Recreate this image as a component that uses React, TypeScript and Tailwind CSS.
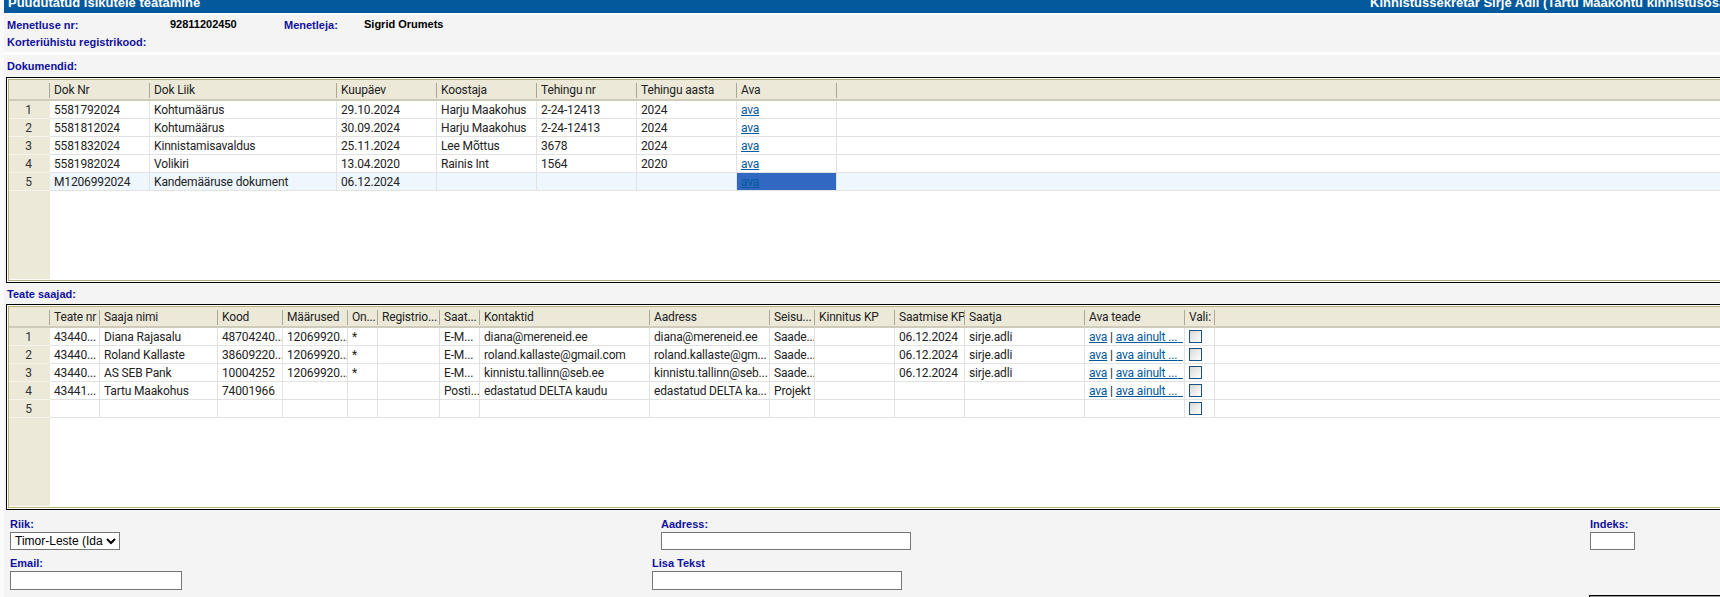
import React from "react";

type Cell = React.ReactNode;

const LINK = "text-[#03599c] underline";

function Grid({ cols, headers, rows, rowClass, cellClass }: {
  cols: string[];
  headers: string[];
  rows: Cell[][];
  rowClass?: (r: number) => string;
  cellClass?: (r: number, c: number) => string;
}) {
  return (
    <div className="h-[206px] w-[1800px] shrink-0 border border-black bg-white ml-[2px]">
      <div className="h-full border border-white">
        <div className="h-full border border-[#b8b078] flex flex-col bg-white pb-[1px]">
          <div className="flex h-[21px] shrink-0 bg-[#ece9d8] pt-[3px] border-b-2 border-[#cfcbba] font-['Roboto'] text-[12px] leading-[15px] tracking-[-0.15px] text-[#222]">
            <div className="w-[41px] h-[15px] shrink-0 border-r border-[#aca899]" />
            {headers.map((h, i) => (
              <div key={i} className={`${cols[i]} h-[15px] shrink-0 border-r border-[#aca899] pl-[4px] overflow-hidden whitespace-nowrap`}>{h}</div>
            ))}
          </div>
          {rows.map((row, r) => (
            <div key={r} className={`flex h-[18px] shrink-0 border-b border-[#e2e2e2] font-['Roboto'] text-[12px] leading-[19px] tracking-[-0.15px] text-[#222] ${rowClass ? rowClass(r) : ""}`}>
              <div className="w-[41px] shrink-0 bg-[#ece9d8] border-b border-[#f6f4ea] -mb-[1px] text-center text-[#333] pr-[2px]">{r + 1}</div>
              {row.map((c, i) => (
                <div key={i} className={`${cols[i]} shrink-0 border-r border-[#e2e2e2] pl-[4px] overflow-hidden whitespace-nowrap ${cellClass ? cellClass(r, i) : ""}`}>{c}</div>
              ))}
            </div>
          ))}
          <div className="flex-1 flex min-h-0">
            <div className="w-[41px] bg-[#ece9d8]" />
          </div>
        </div>
      </div>
    </div>
  );
}

function Ava() {
  return <a className={LINK}>ava</a>;
}

function Open() {
  return (
    <>
      <a className={LINK}>ava</a> | <a className={LINK}>ava ainult ...{"\u00a0\u00a0"}</a>
    </>
  );
}

function Check() {
  return <div className="w-[13px] h-[13px] mt-[2px] border border-[#1c5180] bg-linear-to-br from-[#d8d8d4] to-white" />;
}

const docCols = ["w-[100px]", "w-[187px]", "w-[100px]", "w-[100px]", "w-[100px]", "w-[100px]", "w-[100px]"];
const docHeaders = ["Dok Nr", "Dok Liik", "Kuupäev", "Koostaja", "Tehingu nr", "Tehingu aasta", "Ava"];
const docRows: Cell[][] = [
  ["5581792024", "Kohtumäärus", "29.10.2024", "Harju Maakohus", "2-24-12413", "2024", <Ava />],
  ["5581812024", "Kohtumäärus", "30.09.2024", "Harju Maakohus", "2-24-12413", "2024", <Ava />],
  ["5581832024", "Kinnistamisavaldus", "25.11.2024", "Lee Mõttus", "3678", "2024", <Ava />],
  ["5581982024", "Volikiri", "13.04.2020", "Rainis Int", "1564", "2020", <Ava />],
  ["M1206992024", "Kandemääruse dokument", "06.12.2024", "", "", "", <Ava />],
];

const recCols = ["w-[50px]", "w-[118px]", "w-[65px]", "w-[65px]", "w-[30px]", "w-[62px]", "w-[40px]", "w-[170px]", "w-[120px]", "w-[45px]", "w-[80px]", "w-[70px]", "w-[120px]", "w-[100px]", "w-[30px]"];
const recHeaders = ["Teate nr", "Saaja nimi", "Kood", "Määrused", "On...", "Registrio...", "Saat...", "Kontaktid", "Aadress", "Seisu...", "Kinnitus KP", "Saatmise KP", "Saatja", "Ava teade", "Vali:"];
const recRows: Cell[][] = [
  ["43440...", "Diana Rajasalu", "48704240...", "12069920...", "*", "", "E-M...", "diana@mereneid.ee", "diana@mereneid.ee", "Saade...", "", "06.12.2024", "sirje.adli", <Open />, <Check />],
  ["43440...", "Roland Kallaste", "38609220...", "12069920...", "*", "", "E-M...", "roland.kallaste@gmail.com", "roland.kallaste@gm...", "Saade...", "", "06.12.2024", "sirje.adli", <Open />, <Check />],
  ["43440...", "AS SEB Pank", "10004252", "12069920...", "*", "", "E-M...", "kinnistu.tallinn@seb.ee", "kinnistu.tallinn@seb...", "Saade...", "", "06.12.2024", "sirje.adli", <Open />, <Check />],
  ["43441...", "Tartu Maakohus", "74001966", "", "", "", "Posti...", "edastatud DELTA kaudu", "edastatud DELTA ka...", "Projekt", "", "", "", <Open />, <Check />],
  ["", "", "", "", "", "", "", "", "", "", "", "", "", "", <Check />],
];

const labelCls = "font-['Liberation_Sans'] font-bold text-[11px] leading-[14px] text-[#10109c] whitespace-nowrap";
const inputCls = "block border border-[#767676] bg-white rounded-none";

export default function App() {
  return (
    <div className="w-[1720px] h-[597px] overflow-hidden bg-[#fafafa] pl-[4px]">
      <div className="h-full flex flex-col bg-[#f4f4f4] overflow-hidden">
        <div className="h-[13px] shrink-0 bg-[#03599c] flex justify-between overflow-hidden font-['Liberation_Sans'] font-bold text-[13px] leading-[13px] text-white whitespace-nowrap">
          <div className="-mt-[4px] pl-[4px]">Puudutatud isikutele teatamine</div>
          <div className="-mt-[4px] w-[350px] shrink-0">Kinnistussekretär Sirje Adil (Tartu Maakohtu kinnistusosakond)</div>
        </div>
        <div className="h-[2px] shrink-0 bg-white" />

        <div className="h-[37px] shrink-0 pt-[1px] px-[3px]">
          <div className="flex h-[17px] items-center">
            <div className={`${labelCls} w-[163px]`}>Menetluse nr:</div>
            <div className="w-[114px] font-['Liberation_Sans'] font-bold text-[11px] text-black">92811202450</div>
            <div className={`${labelCls} w-[80px]`}>Menetleja:</div>
            <div className="font-['Liberation_Sans'] font-bold text-[11px] text-black">Sigrid Orumets</div>
          </div>
          <div className="flex h-[17px] items-center">
            <div className={labelCls}>Korteriühistu registrikood:</div>
          </div>
        </div>
        <div className="h-[3px] shrink-0 bg-white" />

        <div className="h-[22px] shrink-0 flex items-center px-[3px]">
          <div className={labelCls}>Dokumendid:</div>
        </div>
        <Grid
          cols={docCols}
          headers={docHeaders}
          rows={docRows}
          rowClass={(r) => (r === 4 ? "bg-[#eef6fe]" : "")}
          cellClass={(r, c) => (r === 4 && c === 6 ? "bg-[#3168c2]" : "")}
        />

        <div className="h-[21px] shrink-0 flex items-center px-[3px]">
          <div className={labelCls}>Teate saajad:</div>
        </div>
        <Grid cols={recCols} headers={recHeaders} rows={recRows} />

        <div className="flex shrink-0 pt-[7px] pl-[6px]">
          <div className="w-[650px] shrink-0">
            <div className={labelCls}>Riik:</div>
            <select className={`${inputCls} mt-[1px] w-[110px] h-[18px] font-['Liberation_Sans'] text-[12px] text-black`}>
              <option>Timor-Leste (Ida-Timor)</option>
            </select>
          </div>
          <div className="w-[930px] shrink-0">
            <div className={`${labelCls} pl-[1px]`}>Aadress:</div>
            <input className={`${inputCls} mt-[1px] ml-[1px] w-[250px] h-[18px]`} />
          </div>
          <div>
            <div className={labelCls}>Indeks:</div>
            <input className={`${inputCls} mt-[1px] w-[45px] h-[18px]`} />
          </div>
        </div>
        <div className="flex shrink-0 pt-[6px] pl-[6px]">
          <div className="w-[642px] shrink-0">
            <div className={labelCls}>Email:</div>
            <input className={`${inputCls} mt-[1px] w-[172px] h-[19px]`} />
          </div>
          <div>
            <div className={labelCls}>Lisa Tekst</div>
            <input className={`${inputCls} mt-[1px] w-[250px] h-[19px]`} />
          </div>
        </div>
        <div className="ml-[1585px] mt-[5px] h-[10px] shrink-0 border-t border-l border-black bg-[#9a9a9a]" />
      </div>
    </div>
  );
}
